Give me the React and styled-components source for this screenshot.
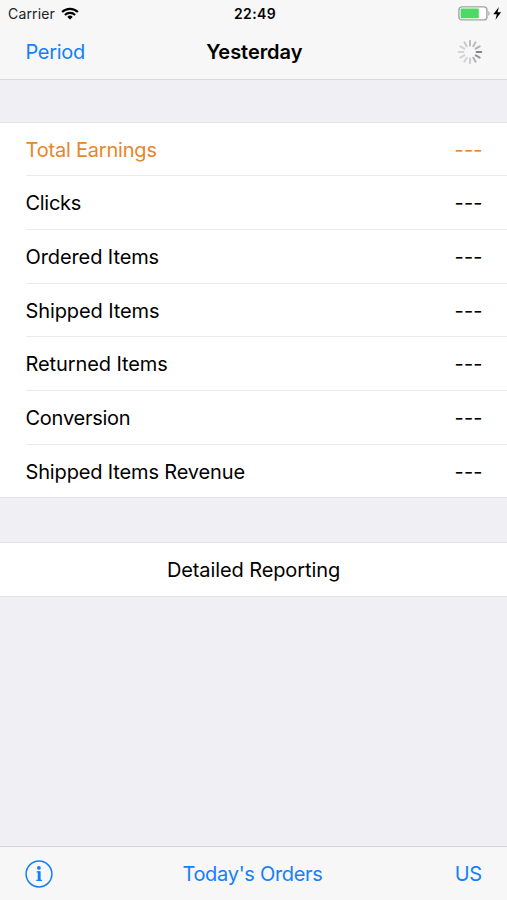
import React from 'react';
import styled, { createGlobalStyle } from 'styled-components';

const rows = [
  { label: 'Total Earnings', value: '---', color: '#e8862a', spacing: '-0.2px' },
  { label: 'Clicks', value: '---', spacing: '-0.3px' },
  { label: 'Ordered Items', value: '---' },
  { label: 'Shipped Items', value: '---' },
  { label: 'Returned Items', value: '---' },
  { label: 'Conversion', value: '---', spacing: '-0.25px' },
  { label: 'Shipped Items Revenue', value: '---', spacing: '-0.15px' },
];

// opacity of each spinner blade, clockwise from 12 o'clock
const blades = [0.42, 0.42, 0.5, 0.85, 0.72, 0.5, 0.3, 0.25, 0.25, 0.25, 0.27, 0.32];

const WifiIcon = () => (
  <svg width="18" height="13" viewBox="0 0 18 13" fill="none" stroke="#000" strokeWidth="2.1">
    <path d="M1.1 5.1a11.2 11.2 0 0 1 15.8 0" />
    <path d="M3.9 8a7.2 7.2 0 0 1 10.2 0" />
    <path d="M9 12.6 6.3 9.9a3.8 3.8 0 0 1 5.4 0z" fill="#000" stroke="none" />
  </svg>
);

const BatteryIcon = () => (
  <svg width="44" height="15" viewBox="0 0 44 15">
    <rect x="0.9" y="0.9" width="28" height="13" rx="3" fill="#fff" stroke="#a3a3a5" strokeWidth="1.4" />
    <rect x="2.6" y="2.6" width="18.2" height="9.6" rx="0.8" fill="#4cd964" />
    <path d="M30.4 5.2c1.6.5 1.6 4 0 4.5z" fill="#a3a3a5" />
    <path d="M40.9 1 35.3 8.3h3.5l-1.3 5.4 5.6-7.5h-3.6z" fill="#000" />
  </svg>
);

const Spinner = () => (
  <svg width="26" height="26" viewBox="-13 -13 26 26" stroke="#6f6f73" strokeWidth="2" strokeLinecap="round">
    {blades.map((opacity, i) => (
      <line key={i} x1="0" y1="-6.6" x2="0" y2="-11.2" opacity={opacity} transform={`rotate(${i * 30})`} />
    ))}
  </svg>
);

const InfoIcon = () => (
  <svg width="28" height="28" viewBox="0 0 28 28" fill="none" stroke="#1380fb">
    <circle cx="14" cy="14" r="12.9" strokeWidth="1.5" />
    <circle cx="13.9" cy="7.9" r="1.9" fill="#1380fb" stroke="none" />
    <path d="M11.6 11.9h3.2v8.3M11.3 20.4h5.6" strokeWidth="1.1" />
    <path d="M14.1 11.5v9" strokeWidth="2.7" />
  </svg>
);

const App = () => {
  return (
    <>
      <GlobalStyle />
      <Screen>
        <Header>
          <StatusBar>
            <Carrier>Carrier <WifiIcon /></Carrier>
            <Clock>22:49</Clock>
            <Battery><BatteryIcon /></Battery>
          </StatusBar>
          <NavBar>
            <BarButton $spacing="-0.3px">Period</BarButton>
            <Title>Yesterday</Title>
            <BarEnd><Spinner /></BarEnd>
          </NavBar>
        </Header>
        <Content>
          <Group>
            {rows.map((row) => (
              <Row key={row.label} $color={row.color}>
                <Label $spacing={row.spacing}>{row.label}</Label>
                <Value>{row.value}</Value>
              </Row>
            ))}
          </Group>
          <Group>
            <ActionRow>Detailed Reporting</ActionRow>
          </Group>
        </Content>
        <Toolbar>
          <InfoButton aria-label="Info"><InfoIcon /></InfoButton>
          <BarButton $spacing="-0.3px">Today's Orders</BarButton>
          <BarButton $end>US</BarButton>
        </Toolbar>
      </Screen>
    </>
  );
};

const GlobalStyle = createGlobalStyle`
  * {
    box-sizing: border-box;
  }

  body {
    margin: 0;
    font-family: Inter, 'Liberation Sans', sans-serif;
  }

  svg {
    display: block;
  }
`;

const Screen = styled.div`
  display: flex;
  flex-direction: column;
  height: 900px;
  background: #efeff4;
  color: #000;
  font-size: 20px;
  letter-spacing: -0.1px;
`;

const Header = styled.header`
  height: 80px;
  background: #f7f7f8;
  border-bottom: 1.5px solid #d9d9dc;
`;

const StatusBar = styled.div`
  display: grid;
  grid-template-columns: 1fr auto 1fr;
  align-items: center;
  height: 27px;
  padding: 0 5px 0 8px;
  font-size: 14px;
`;

const Carrier = styled.div`
  display: flex;
  align-items: center;
  gap: 6px;
  color: #222;
  letter-spacing: 0.15px;
`;

const Clock = styled.div`
  font-weight: 600;
  letter-spacing: 0.4px;
`;

const Battery = styled.div`
  justify-self: end;
`;

const NavBar = styled.div`
  display: grid;
  grid-template-columns: 1fr auto 1fr;
  align-items: center;
  height: 50px;
  padding: 0 24px 0 25.5px;
`;

const Title = styled.h1`
  margin: 0;
  font-size: 20px;
  font-weight: 600;
  letter-spacing: -0.05px;
`;

const BarButton = styled.button`
  justify-self: ${({ $end }) => ($end ? 'end' : 'start')};
  padding: 0;
  border: 0;
  background: none;
  color: #1380fb;
  font: inherit;
  letter-spacing: ${({ $spacing }) => $spacing || '-0.2px'};
`;

const BarEnd = styled.div`
  justify-self: end;
`;

const Content = styled.main`
  flex: 1;
  display: flex;
  flex-direction: column;
  gap: 44px;
  padding-top: 42px;
`;

const Group = styled.section`
  background: #fff;
  border-top: 1px solid #e2e2e6;
  border-bottom: 1px solid #e2e2e6;
`;

const Row = styled.div`
  display: flex;
  align-items: center;
  justify-content: space-between;
  height: 53.7px;
  margin-left: 25.5px;
  padding: 1.4px 24.5px 0 0;
  color: ${({ $color }) => $color || '#000'};

  &:first-child {
    height: 52.2px;
  }

  & + & {
    border-top: 1px solid #ebebed;
  }
`;

const Label = styled.span`
  letter-spacing: ${({ $spacing }) => $spacing || 'inherit'};
`;

const Value = styled.span`
  letter-spacing: 0.1px;
`;

const ActionRow = styled.div`
  display: flex;
  align-items: center;
  justify-content: center;
  height: 52.5px;
`;

const Toolbar = styled.footer`
  display: grid;
  grid-template-columns: 1fr auto 1fr;
  align-items: center;
  height: 54px;
  padding: 0 25px 0 23px;
  background: #f7f7f8;
  border-top: 1.5px solid #d5d5d8;
`;

const InfoButton = styled.button`
  justify-self: start;
  margin-left: 2px;
  padding: 0;
  border: 0;
  background: none;
`;

export default App;
